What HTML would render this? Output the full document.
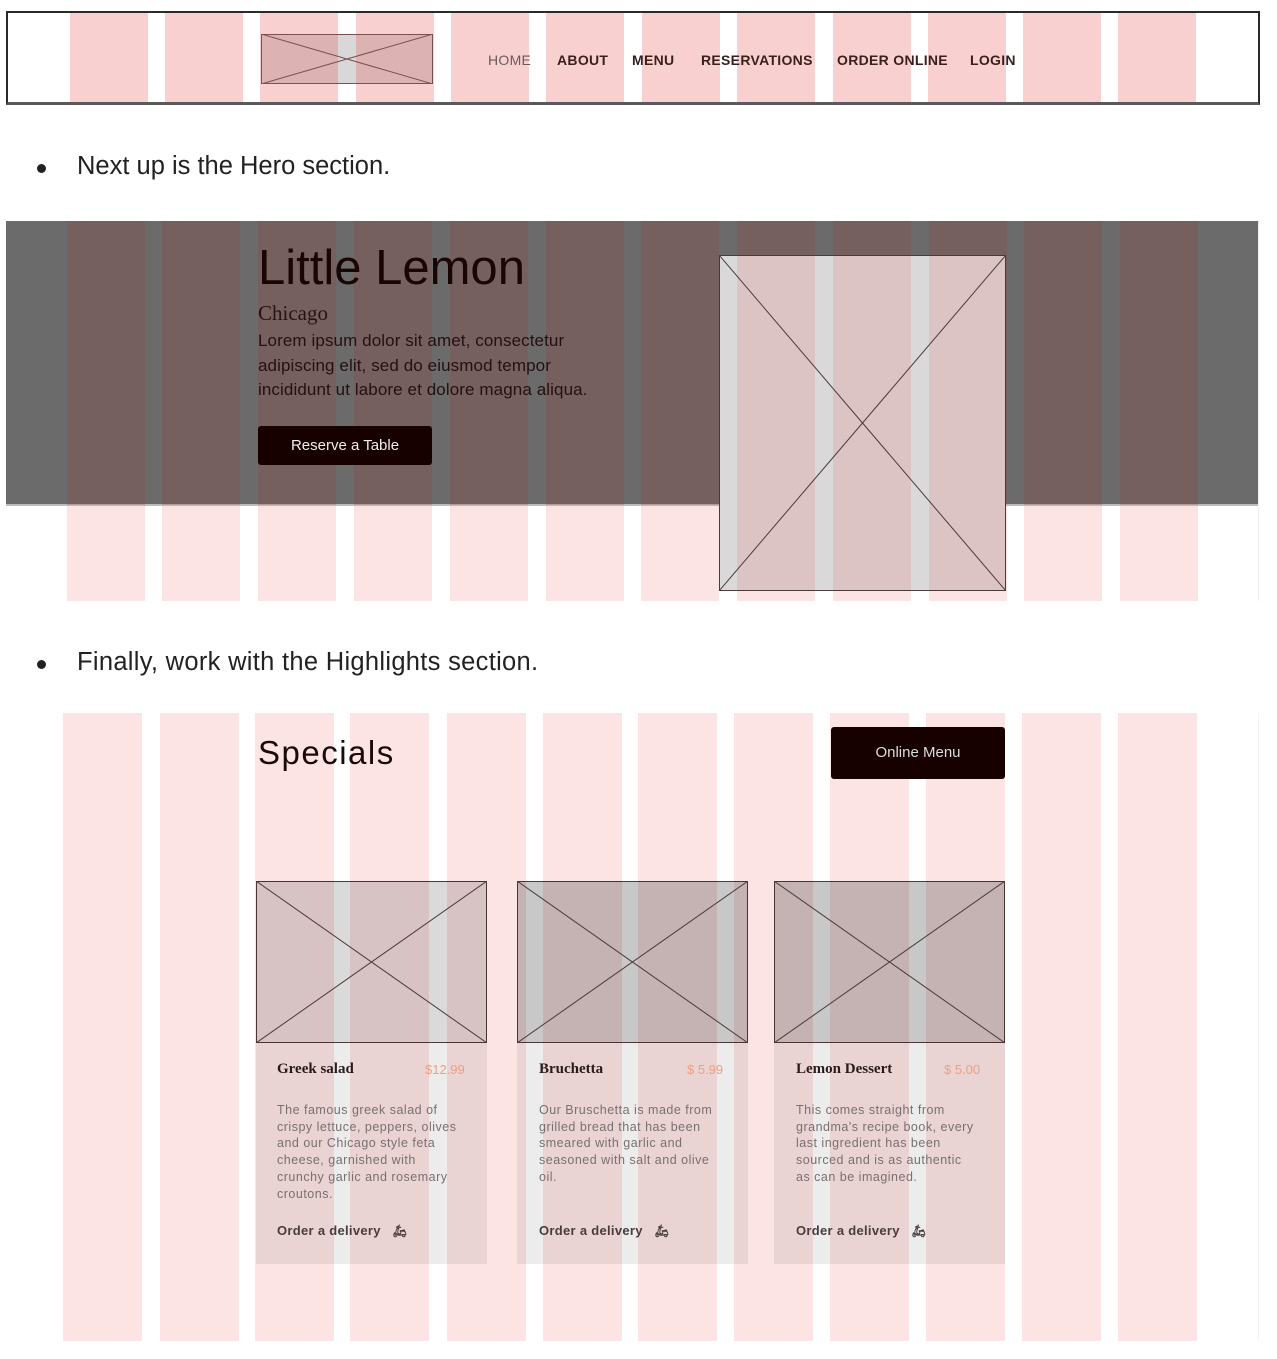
<!DOCTYPE html>
<html><head><meta charset="utf-8"><style>
*{margin:0;padding:0;box-sizing:border-box}
body{width:1277px;height:1359px;background:#fff;position:relative;overflow:hidden;font-family:"Liberation Sans",sans-serif}
.a{position:absolute}
.cn{background:#f9d0d0;top:13px;height:89px;width:78px}
.ch{background:#fce4e4;top:221px;height:380px;width:78px}
.hc{background:rgba(150,60,60,0.25);top:221px;height:284px;width:78px}
.cs{background:#fce4e4;top:713px;height:628px;width:79px}
.m{mix-blend-mode:multiply}
.nav{top:60px;font-size:14px;font-weight:bold;color:#3a1f1f;letter-spacing:0.3px;transform:translateY(-50%)}
.title{font-family:"Liberation Serif",serif;font-weight:bold;font-size:15px;color:#2a1a1a}
.price{font-size:13px;color:#f0a080}
.desc{font-size:12.5px;line-height:16.7px;color:#7a7070;letter-spacing:0.5px;white-space:nowrap}
.ord{font-size:13px;font-weight:bold;color:#4a3c3c;letter-spacing:0.3px}
</style></head><body>

<div class="a cn" style="left:70px"></div><div class="a cn" style="left:165px"></div><div class="a cn" style="left:260px"></div><div class="a cn" style="left:356px"></div><div class="a cn" style="left:451px"></div><div class="a cn" style="left:546px"></div><div class="a cn" style="left:642px"></div><div class="a cn" style="left:737px"></div><div class="a cn" style="left:833px"></div><div class="a cn" style="left:928px"></div><div class="a cn" style="left:1023px"></div><div class="a cn" style="left:1118px"></div>
<div class="a" style="left:6px;top:11px;width:1254px;height:94px;border:2px solid #2a2a2a;border-bottom:3px solid #5a5a5a"></div>
<div class="a" style="left:261px;top:34px;width:172px;height:50px;background:#dcb2b2;border:1px solid #7a5050"></div>
<div class="a" style="left:338px;top:35px;width:18px;height:48px;background:#d8d8d8"></div>
<svg class="a" style="left:261px;top:34px" width="172" height="50"><line x1="0" y1="0" x2="172" y2="50" stroke="#7a5050"/><line x1="0" y1="50" x2="172" y2="0" stroke="#7a5050"/></svg>
<div class="a nav" style="left:488px;color:#6a5a5a;font-weight:normal">HOME</div>
<div class="a nav" style="left:557px">ABOUT</div>
<div class="a nav" style="left:632px">MENU</div>
<div class="a nav" style="left:701px">RESERVATIONS</div>
<div class="a nav" style="left:837px">ORDER ONLINE</div>
<div class="a nav" style="left:970px">LOGIN</div>

<div class="a" style="left:37px;top:164px;width:9px;height:9px;border-radius:50%;background:#222"></div>
<div class="a" style="left:77px;top:152px;font-size:25.5px;color:#222">Next up is the Hero section.</div>

<div class="a ch" style="left:67px"></div><div class="a ch" style="left:162px"></div><div class="a ch" style="left:258px"></div><div class="a ch" style="left:354px"></div><div class="a ch" style="left:450px"></div><div class="a ch" style="left:546px"></div><div class="a ch" style="left:641px"></div><div class="a ch" style="left:737px"></div><div class="a ch" style="left:833px"></div><div class="a ch" style="left:929px"></div><div class="a ch" style="left:1024px"></div><div class="a ch" style="left:1120px"></div>
<div class="a" style="left:6px;top:221px;width:1252px;height:285px;background:#6b6b6b;border-bottom:2px solid #bbb"></div>
<div class="a hc" style="left:67px"></div><div class="a hc" style="left:162px"></div><div class="a hc" style="left:258px"></div><div class="a hc" style="left:354px"></div><div class="a hc" style="left:450px"></div><div class="a hc" style="left:546px"></div><div class="a hc" style="left:641px"></div><div class="a hc" style="left:737px"></div><div class="a hc" style="left:833px"></div><div class="a hc" style="left:929px"></div><div class="a hc" style="left:1024px"></div><div class="a hc" style="left:1120px"></div>
<div class="a" style="left:1258px;top:221px;width:1px;height:380px;background:#eee"></div>
<div class="a" style="left:258px;top:240px;font-size:49px;color:#1a0505">Little Lemon</div>
<div class="a" style="left:258px;top:301px;font-family:'Liberation Serif',serif;font-size:21px;color:#2a1212">Chicago</div>
<div class="a" style="left:258px;top:329px;font-size:17px;line-height:24.5px;color:#241010;white-space:nowrap;letter-spacing:0.1px">Lorem ipsum dolor sit amet, consectetur<br>adipiscing elit, sed do eiusmod tempor<br>incididunt ut labore et dolore magna aliqua.</div>
<div class="a" style="left:258px;top:426px;width:174px;height:39px;background:#170000;border-radius:3px;color:#eee;font-size:15px;text-align:center;line-height:39px">Reserve a Table</div>
<div class="a" style="left:719px;top:255px;width:287px;height:336px;background:#dcc4c4;border:1px solid #4a3a3a"></div>
<div class="a" style="left:720px;top:256px;width:17px;height:334px;background:#d9d9d9"></div>
<div class="a" style="left:815px;top:256px;width:18px;height:334px;background:#d9d9d9"></div>
<div class="a" style="left:911px;top:256px;width:18px;height:334px;background:#d9d9d9"></div>
<svg class="a" style="left:719px;top:255px" width="287" height="336"><line x1="0" y1="0" x2="287" y2="336" stroke="#4a3a3a"/><line x1="0" y1="336" x2="287" y2="0" stroke="#4a3a3a"/></svg>

<div class="a" style="left:37px;top:660px;width:9px;height:9px;border-radius:50%;background:#222"></div>
<div class="a" style="left:77px;top:648px;font-size:25.5px;color:#222;letter-spacing:0.3px">Finally, work with the Highlights section.</div>

<div class="a cs" style="left:63px"></div><div class="a cs" style="left:160px"></div><div class="a cs" style="left:255px"></div><div class="a cs" style="left:350px"></div><div class="a cs" style="left:447px"></div><div class="a cs" style="left:543px"></div><div class="a cs" style="left:638px"></div><div class="a cs" style="left:734px"></div><div class="a cs" style="left:830px"></div><div class="a cs" style="left:926px"></div><div class="a cs" style="left:1022px"></div><div class="a cs" style="left:1118px"></div>
<div class="a" style="left:1258px;top:713px;width:1px;height:628px;background:#f2f2f2"></div>
<div class="a" style="left:258px;top:734px;font-size:33px;color:#1a0a0a;letter-spacing:1.5px">Specials</div>
<div class="a" style="left:831px;top:727px;width:174px;height:52px;background:#170000;border-radius:3px;color:#ddd;font-size:15px;text-align:center;line-height:52px">Online Menu</div>

<div class="a m" style="left:256px;top:1043px;width:231px;height:221px;background:#ececec"></div>
<div class="a m" style="left:517px;top:1043px;width:231px;height:221px;background:#ececec"></div>
<div class="a m" style="left:774px;top:1043px;width:231px;height:221px;background:#ececec"></div>
<div class="a m" style="left:256px;top:881px;width:231px;height:162px;background:#dadada;border:1px solid #4a3a3a"></div>
<div class="a m" style="left:517px;top:881px;width:231px;height:162px;background:#c8c8c8;border:1px solid #4a3a3a"></div>
<div class="a m" style="left:774px;top:881px;width:231px;height:162px;background:#c8c8c8;border:1px solid #4a3a3a"></div>
<svg class="a" style="left:256px;top:881px" width="231" height="162"><line x1="0" y1="0" x2="231" y2="162" stroke="#4a3a3a"/><line x1="0" y1="162" x2="231" y2="0" stroke="#4a3a3a"/></svg>
<svg class="a" style="left:517px;top:881px" width="231" height="162"><line x1="0" y1="0" x2="231" y2="162" stroke="#4a3a3a"/><line x1="0" y1="162" x2="231" y2="0" stroke="#4a3a3a"/></svg>
<svg class="a" style="left:774px;top:881px" width="231" height="162"><line x1="0" y1="0" x2="231" y2="162" stroke="#4a3a3a"/><line x1="0" y1="162" x2="231" y2="0" stroke="#4a3a3a"/></svg>

<div class="a title" style="left:277px;top:1061px">Greek salad</div>
<div class="a price" style="left:425px;top:1062px">$12.99</div>
<div class="a desc" style="left:277px;top:1102px">The famous greek salad of<br>crispy lettuce, peppers, olives<br>and our Chicago style feta<br>cheese, garnished with<br>crunchy garlic and rosemary<br>croutons.</div>
<div class="a ord" style="left:277px;top:1223px">Order a delivery &nbsp;&nbsp;<span style="font-size:12px">&#x1F6F5;&#xFE0E;</span></div>

<div class="a title" style="left:539px;top:1061px">Bruchetta</div>
<div class="a price" style="left:687px;top:1062px">$ 5.99</div>
<div class="a desc" style="left:539px;top:1102px">Our Bruschetta is made from<br>grilled bread that has been<br>smeared with garlic and<br>seasoned with salt and olive<br>oil.</div>
<div class="a ord" style="left:539px;top:1223px">Order a delivery &nbsp;&nbsp;<span style="font-size:12px">&#x1F6F5;&#xFE0E;</span></div>

<div class="a title" style="left:796px;top:1061px">Lemon Dessert</div>
<div class="a price" style="left:944px;top:1062px">$ 5.00</div>
<div class="a desc" style="left:796px;top:1102px">This comes straight from<br>grandma's recipe book, every<br>last ingredient has been<br>sourced and is as authentic<br>as can be imagined.</div>
<div class="a ord" style="left:796px;top:1223px">Order a delivery &nbsp;&nbsp;<span style="font-size:12px">&#x1F6F5;&#xFE0E;</span></div>

</body></html>
